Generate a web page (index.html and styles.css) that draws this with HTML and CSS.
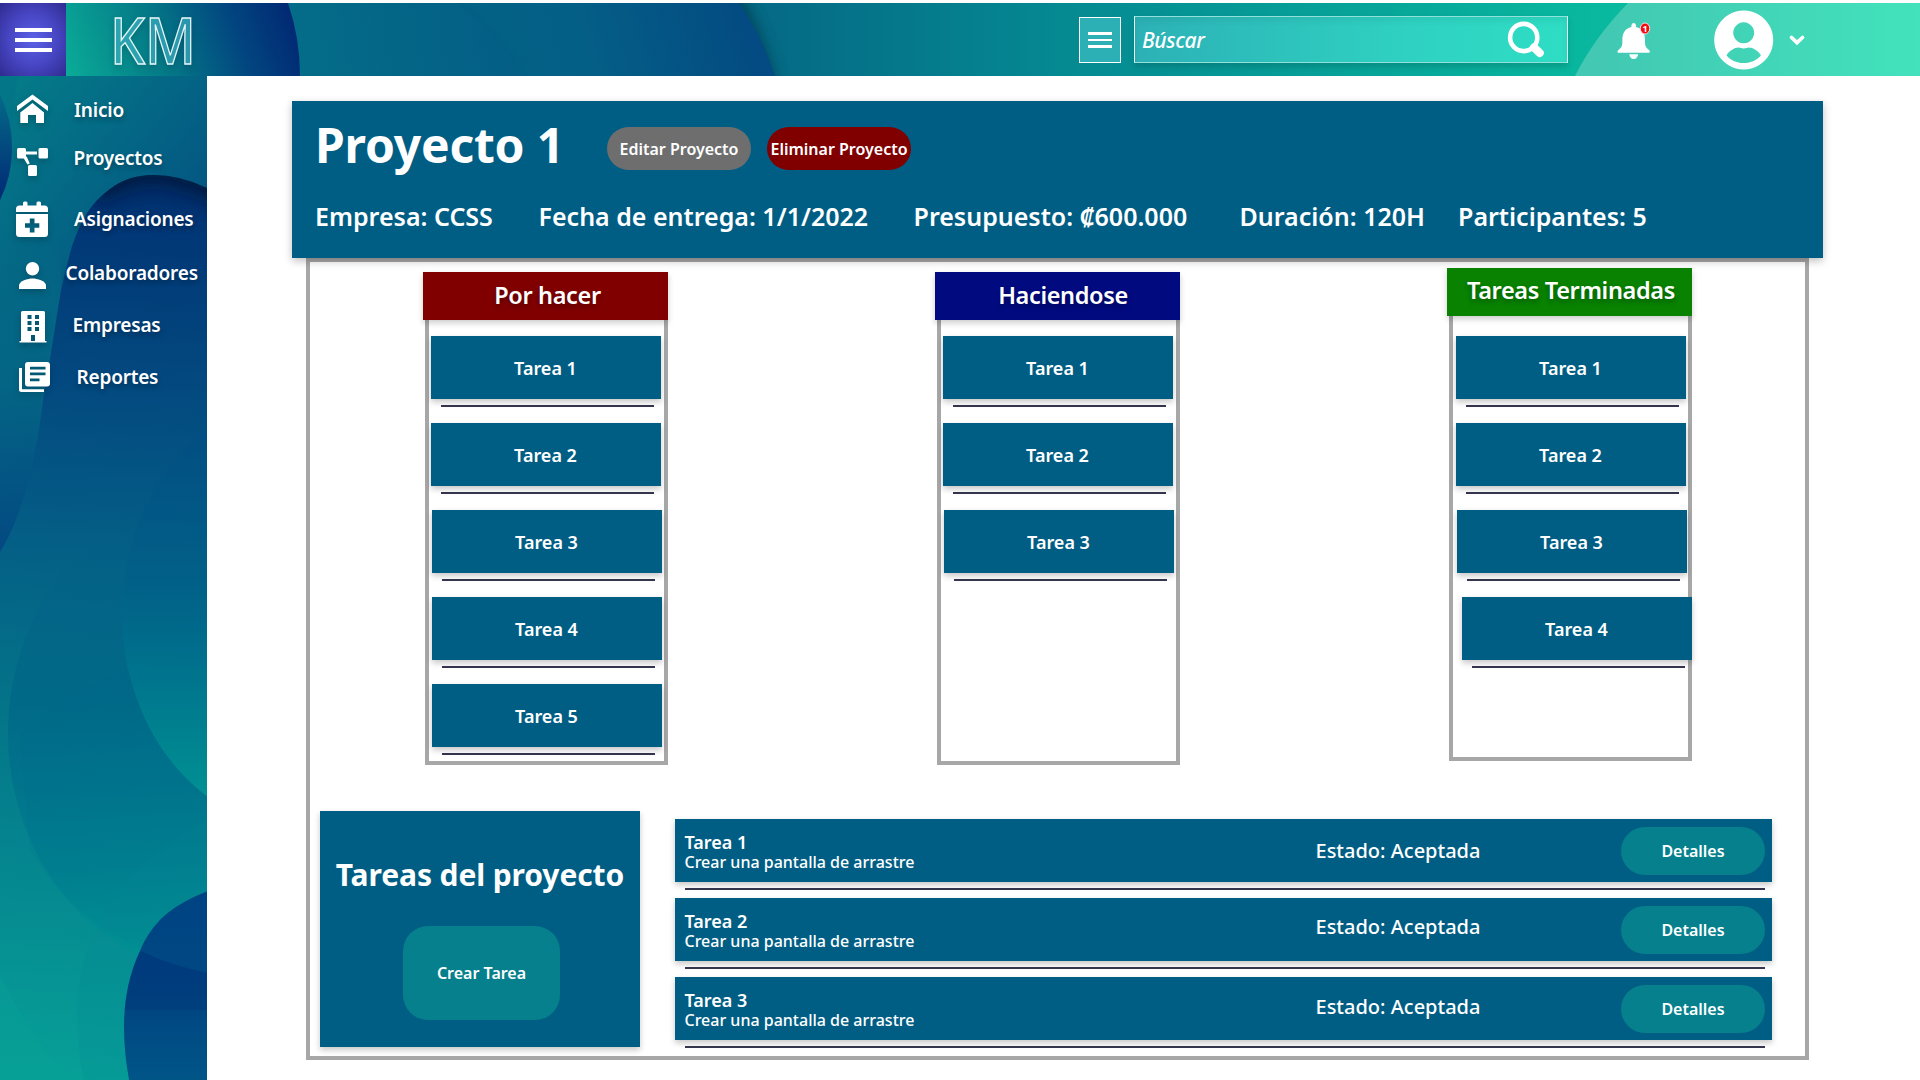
FILE: index.html
```html
<!DOCTYPE html>
<html lang="es">
<head>
<meta charset="utf-8">
<title>KM - Proyecto 1</title>
<link rel="stylesheet" href="styles.css">
</head>
<body>
<header class="topbar">
  <svg class="backdrop" viewBox="0 3 1920 73" preserveAspectRatio="none" aria-hidden="true">
    <defs>
      <linearGradient id="tb-base" gradientUnits="userSpaceOnUse" x1="775" y1="0" x2="1620" y2="0"><stop offset="0" stop-color="#056b86"/><stop offset=".35" stop-color="#058a92"/><stop offset="1" stop-color="#09ba9f"/></linearGradient>
      <linearGradient id="tb-mid" gradientUnits="userSpaceOnUse" x1="450" y1="76" x2="740" y2="0"><stop offset="0" stop-color="#046386"/><stop offset=".45" stop-color="#045f86"/><stop offset="1" stop-color="#034b82"/></linearGradient>
      <linearGradient id="tb-low" gradientUnits="userSpaceOnUse" x1="290" y1="40" x2="530" y2="0"><stop offset="0" stop-color="#046d88"/><stop offset="1" stop-color="#045c86"/></linearGradient>
      <linearGradient id="tb-left" gradientUnits="userSpaceOnUse" x1="66" y1="76" x2="285" y2="0"><stop offset="0" stop-color="#0aac98"/><stop offset=".45" stop-color="#047586"/><stop offset=".75" stop-color="#024680"/><stop offset="1" stop-color="#012a74"/></linearGradient>
      <linearGradient id="tb-right" gradientUnits="userSpaceOnUse" x1="1600" y1="0" x2="1920" y2="0"><stop offset="0" stop-color="#42c8b3"/><stop offset="1" stop-color="#42e2bc"/></linearGradient>
      <filter id="soft" x="-20%" y="-50%" width="140%" height="200%"><feGaussianBlur stdDeviation="7"/></filter>
    </defs>
    <rect y="3" width="1920" height="73" fill="url(#tb-base)"/>
    <path d="M0-20H733Q766 30 780 100H0Z" fill="#013f55" opacity=".8" filter="url(#soft)"/>
    <path d="M0 3H739Q764 40 775 76H0Z" fill="url(#tb-mid)"/>
    <path d="M0 3H455Q495 30 521 76H0Z" fill="#04507a" opacity=".35" filter="url(#soft)"/>
    <path d="M0 3H455Q495 30 521 76H0Z" fill="url(#tb-low)"/>
    <path d="M0 3H288Q300 38 300 76H0Z" fill="url(#tb-left)"/>
    <path d="M1628 3H1920V76H1575Q1594 38 1628 3Z" fill="url(#tb-right)"/>
  </svg>
  <button class="menu-toggle" aria-label="Menú"><i></i><i></i><i></i></button>
  <svg class="logo" width="100" height="60" viewBox="0 0 100 60" role="img" aria-label="KM"><text x="2" y="53.500" textLength="86" lengthAdjust="spacingAndGlyphs">KM</text></svg>
  <div class="tools">
    <button class="filter" aria-label="Filtro"><i></i><i></i><i></i></button>
    <div class="search">
      <span>Búscar</span>
      <svg width="40" height="40" viewBox="0 0 40 40"><circle cx="17.7" cy="17.5" r="13.6" fill="none" stroke="#fff" stroke-width="4.6"/><path d="M28 27.5L33.8 33" stroke="#fff" stroke-width="8" stroke-linecap="round"/></svg>
    </div>
    <svg class="bell" width="40" height="44" viewBox="1614 19 40 44"><path d="M1633.700 23q2.300 0 2.300 2.500v1.500c6.500 1.500 9 6.500 9 12.500 0 7 .5 7.500 4 10.500 1.800 2 .8 2.700-.5 2.700h-29.600c-1.300 0-2.300-.7-.5-2.700 3.500-3 4-3.500 4-10.500 0-6 2.500-11 9-12.500v-1.500q0-2.500 2.300-2.500zM1629.200 54.300h9q-.8 4.700-4.500 4.700t-4.500-4.700z" fill="#fff"/><ellipse cx="1645" cy="28.500" rx="4.700" ry="5.500" fill="#f00c12" stroke="#fff" stroke-width=".8"/><text x="1645" y="32" class="badge">1</text></svg>
    <svg class="avatar" width="60" height="60" viewBox="1714 9.500 60 60"><path fill="#fff" fill-rule="evenodd" d="M1743.700 10a29.500 29.500 0 1 0 .01 0zM1743.700 21.800a10.500 10.500 0 1 1-.01 0zM1726.500 54.700c3-4.500 8-7.700 12-7.700 2 0 3 .9 5.200.9s3.200-.9 5.200-.9c4 0 9 3.200 12 7.700-3.500 4.800-10 7.800-17.200 7.800s-13.700-3-17.200-7.800z"/></svg>
    <svg class="chevron" width="18" height="14" viewBox="0 0 18 14"><path d="M3.500 4.500L9 9.700 14.500 4.500" fill="none" stroke="#fff" stroke-width="3.700" stroke-linecap="round"/></svg>
  </div>
</header>
<div class="shell">
  <nav class="sidebar">
    <svg class="backdrop" viewBox="0 76 207 1004" preserveAspectRatio="none" aria-hidden="true">
      <defs>
        <linearGradient id="sb-top" gradientUnits="userSpaceOnUse" x1="10" y1="80" x2="190" y2="230"><stop offset="0" stop-color="#047b88"/><stop offset=".55" stop-color="#046685"/><stop offset="1" stop-color="#045482"/></linearGradient>
        <linearGradient id="sb-wave" gradientUnits="userSpaceOnUse" x1="0" y1="250" x2="30" y2="550"><stop offset="0" stop-color="#047386" stop-opacity="0"/><stop offset=".45" stop-color="#046585"/><stop offset="1" stop-color="#034982"/></linearGradient>
        <linearGradient id="sb-body" gradientUnits="userSpaceOnUse" x1="130" y1="175" x2="90" y2="1080"><stop offset="0" stop-color="#012b69"/><stop offset=".06" stop-color="#013776"/><stop offset=".25" stop-color="#034b80"/><stop offset=".42" stop-color="#046086"/><stop offset=".6" stop-color="#047589"/><stop offset=".8" stop-color="#058a91"/><stop offset="1" stop-color="#07a097"/></linearGradient>
        <linearGradient id="sb-b" gradientUnits="userSpaceOnUse" x1="80" y1="520" x2="110" y2="970"><stop offset="0" stop-color="#035b87" stop-opacity="0"/><stop offset=".4" stop-color="#006688" stop-opacity=".75"/><stop offset=".75" stop-color="#017f90"/><stop offset="1" stop-color="#019694"/></linearGradient>
        <linearGradient id="sb-a" gradientUnits="userSpaceOnUse" x1="170" y1="430" x2="170" y2="800"><stop offset="0" stop-color="#014d83" stop-opacity=".6"/><stop offset=".4" stop-color="#005e88" stop-opacity=".6"/><stop offset=".65" stop-color="#00748e"/><stop offset="1" stop-color="#009995"/></linearGradient>
        <linearGradient id="sb-blob" gradientUnits="userSpaceOnUse" x1="160" y1="895" x2="160" y2="1080"><stop offset="0" stop-color="#003a80"/><stop offset=".5" stop-color="#004280"/><stop offset="1" stop-color="#005587"/></linearGradient>
        <linearGradient id="sb-drop" x1="0" y1="0" x2="0" y2="1"><stop offset="0" stop-color="#046a88"/><stop offset="1" stop-color="#012975"/></linearGradient>
        <filter id="blur" x="-50%" y="-50%" width="200%" height="200%"><feGaussianBlur stdDeviation="9"/></filter>
        <clipPath id="body-clip"><path id="body-shape" d="M220 195L207 188Q180 175 153 175Q128 175 110 189Q96 199 87 213Q78 228 72 246Q64 275 60 296L50 359Q46 385 43 400Q39 436 33 461Q27 490 17 517Q9 538 0 552V1080H220Z"/></clipPath>
        <clipPath id="blob-clip"><path d="M220 887Q180 900 160 920Q146 935 140 951Q124 985 124 1027Q124 1055 130 1085H220Z"/></clipPath>
      </defs>
      <rect y="76" width="207" height="1004" fill="url(#sb-top)"/>
      <rect y="250" width="60" height="310" fill="url(#sb-wave)"/>
      <path d="M0 76H18Q12 105 12 140 12 175 0 201Z" fill="#046f88" opacity=".35"/>
      <path d="M0 94Q12 120 12 148T0 200Z" fill="url(#sb-drop)"/>
      <use href="#body-shape" fill="url(#sb-body)"/>
      <g clip-path="url(#body-clip)">
        <path d="M85 160H230V210Q185 184 153 183Q125 184 100 204Z" fill="#011430" opacity=".75" filter="url(#blur)"/>
        <ellipse cx="220" cy="733" rx="212" ry="240" fill="url(#sb-b)"/>
        <path d="M20 735Q90 665 220 650V973Q90 950 30 850Z" fill="#006b8c" opacity=".08"/>
        <ellipse cx="300" cy="613" rx="178" ry="215" fill="url(#sb-a)"/>
        <path d="M128 675Q165 655 207 651V803Q150 745 128 675Z" fill="#00708d" opacity=".18"/>
        <path d="M0 974Q25 1030 70 1080H0Z" fill="#09a397" opacity=".3"/>
        <path d="M207 820Q80 890 77 1010 77 1050 84 1080H207Z" fill="#058595" opacity=".18"/>
      </g>
      <g clip-path="url(#blob-clip)">
        <rect x="110" y="880" width="100" height="200" fill="url(#sb-blob)"/>
        <path d="M110 880H207V973Q170 965 140 951L110 935Z" fill="#00598a" opacity=".3"/>
        <path d="M110 935L140 951Q170 965 207 973V1010H110Z" fill="#003478" opacity=".35"/>
      </g>
    </svg>
    <ul class="nav-list">
      <li class="nav-item"><svg viewBox="0 90 60 40"><path d="M17 111v-5l15.500-11.500L48 106v5L32.500 99.500zM20.300 112.500l12.200-9.500 11.500 9.500V123h-8v-8h-8v8h-7.700z"/></svg><span>Inicio</span></li>
      <li class="nav-item projects"><svg viewBox="0 138 60 40"><rect x="17" y="148" width="9" height="10.500" rx="1.500"/><rect x="38.500" y="148" width="9.500" height="10.500" rx="1.500"/><rect x="28" y="165" width="9" height="11" rx="1.500"/><path d="M26 151.500h11v3h-11zM23.500 158l3.200-1.500 3 7-2.200 1z"/></svg><span>Proyectos</span></li>
      <li class="nav-item assigns"><svg viewBox="0 199 60 40"><path fill-rule="evenodd" d="M16 212v-3q0-3.500 3.500-3.500H23V203q0-1.500 1.500-1.500h1.500q1.500 0 1.500 1.500v2.500h9V203q0-1.500 1.500-1.500h1.500q1.500 0 1.500 1.500v2.500h3.500q3.500 0 3.500 3.500v3zM16 214h32v19.500q0 3.500-3.500 3.500h-25q-3.500 0-3.500-3.500zM29.800 218.500v4.700H25v4.600h4.800v4.700h4.700v-4.700h4.800v-4.600h-4.800v-4.700z"/></svg><span>Asignaciones</span></li>
      <li class="nav-item people"><svg viewBox="0 253 60 40"><circle cx="32.500" cy="268.800" r="6.700"/><path d="M19 289v-3.500c0-4.500 9-7 13.500-7s13.500 2.500 13.500 7v3.500z"/></svg><span>Colaboradores</span></li>
      <li class="nav-item companies"><svg viewBox="0 305 60 40"><path fill-rule="evenodd" d="M22.500 311h21q1.500 0 1.500 1.500V341h1.500v1.500h-27V341H21v-28.500q0-1.500 1.500-1.500zM27.500 315v4h4v-4zM35 315v4h4v-4zM27.500 321v4h4v-4zM35 321v4h4v-4zM27.500 327v4h4v-4zM35 327v4h4v-4zM31 335v6h4v-6z"/></svg><span>Empresas</span></li>
      <li class="nav-item reports"><svg viewBox="0 357 60 40"><path fill-rule="evenodd" d="M28 362h19q3 0 3 3v18.500q0 3-3 3H28q-3 0-3-3V365q0-3 3-3zM30 366.700v2.700h15.500v-2.700zM30 372.500v2.700h15.500v-2.700zM30 378.500v2.700h9.500v-2.700zM19 368h3v21.300h22V392H21.500q-2.500 0-2.500-2.500z"/></svg><span>Reportes</span></li>
    </ul>
  </nav>
  <main class="content">
    <section class="project">
      <div class="project-top">
        <h1>Proyecto 1</h1>
        <button class="pill edit">Editar Proyecto</button>
        <button class="pill delete">Eliminar Proyecto</button>
      </div>
      <div class="facts">
        <span class="f1">Empresa: CCSS</span><span class="f2">Fecha de entrega: 1/1/2022</span><span class="f3">Presupuesto: ₡600.000</span><span class="f4">Duración: 120H</span><span class="f5">Participantes: 5</span>
      </div>
    </section>
    <section class="frame">
      <div class="board">
        <div class="column todo">
          <h2>Por hacer</h2>
          <div class="stack">
            <div class="card">Tarea 1</div>
            <div class="card">Tarea 2</div>
            <div class="card nudge">Tarea 3</div>
            <div class="card nudge">Tarea 4</div>
            <div class="card nudge">Tarea 5</div>
          </div>
        </div>
        <div class="column doing">
          <h2>Haciendose</h2>
          <div class="stack">
            <div class="card">Tarea 1</div>
            <div class="card">Tarea 2</div>
            <div class="card nudge">Tarea 3</div>
          </div>
        </div>
        <div class="column done">
          <h2>Tareas Terminadas</h2>
          <div class="stack">
            <div class="card">Tarea 1</div>
            <div class="card">Tarea 2</div>
            <div class="card nudge">Tarea 3</div>
            <div class="card far">Tarea 4</div>
          </div>
        </div>
      </div>
      <div class="bottom">
        <div class="create">
          <h2>Tareas del proyecto</h2>
          <button>Crear Tarea</button>
        </div>
        <div class="list">
          <div class="row"><div class="what"><b>Tarea 1</b><span>Crear una pantalla de arrastre</span></div><div class="state">Estado: Aceptada</div><button>Detalles</button></div>
          <div class="row"><div class="what"><b>Tarea 2</b><span>Crear una pantalla de arrastre</span></div><div class="state up3">Estado: Aceptada</div><button>Detalles</button></div>
          <div class="row"><div class="what"><b>Tarea 3</b><span>Crear una pantalla de arrastre</span></div><div class="state up2">Estado: Aceptada</div><button>Detalles</button></div>
        </div>
      </div>
    </section>
  </main>
</div>
</body>
</html>
```
FILE: styles.css
```css
* { box-sizing: border-box; }
body { margin: 0; padding-top: 3px; width: 1920px; height: 1080px; overflow: hidden; background: #fff; color: #fff; font-family: "Noto Sans", sans-serif; font-weight: 600; }
h1, h2, ul { margin: 0; padding: 0; }
button { border: 0; padding: 0; color: inherit; font: inherit; white-space: nowrap; }
span { white-space: nowrap; }

/* Header */
.topbar { position: relative; height: 73px; display: flex; align-items: stretch; }
.backdrop { position: absolute; inset: 0; width: 100%; height: 100%; z-index: -1; }
.menu-toggle { width: 66px; display: flex; flex-direction: column; align-items: center; justify-content: center; gap: 6px; background: radial-gradient(ellipse 46px 50px, #5a62e8, #4644c0 55%, #302c92); }
.menu-toggle i { width: 37px; height: 4px; background: #fff; }
.logo { margin: 7px 0 0 42px; overflow: visible; filter: drop-shadow(0 3px 3px rgba(0, 0, 0, .2)); }
.logo text { font: 500 64px "Noto Sans", sans-serif; fill: rgba(70, 190, 210, .6); stroke: #e8f6f8; stroke-width: 1.4px; }
.tools { margin-left: auto; display: flex; align-items: flex-start; padding-right: 114px; }
.filter { width: 42px; height: 46px; margin: 14px 13px 0 0; border: 1px solid #fff; display: flex; flex-direction: column; align-items: center; justify-content: center; gap: 4px; background: #2cb0b6; }
.filter i { width: 24px; height: 2.5px; background: #fff; }
.search { width: 434px; height: 47px; margin-top: 13px; padding: 1px 21px 0 7px; border: 1px solid #fff; border-width: 1.500px 1px; border-color: #92e0da #e6fbf8; display: flex; align-items: center; justify-content: space-between; background: linear-gradient(90deg, #2cb1b6, #2fd2c2 65%, #2eddc4); box-shadow: 0 4px 6px rgba(0, 0, 0, .14), inset 0 4px 6px rgba(0, 0, 0, .06); font: italic 500 21px/40px "Noto Sans", sans-serif; letter-spacing: -.4px; }
.bell { margin: 16px 0 0 46px; }
.badge { font: 700 9px "Noto Sans", sans-serif; fill: #fff; text-anchor: middle; }
.avatar { margin: 6.500px 0 0 60px; }
.chevron { margin: 29.500px 0 0 14px; }

/* Sidebar */
.shell { display: flex; height: 1004px; }
.sidebar { position: relative; width: 207px; padding-top: 14px; }
.nav-list { list-style: none; }
.nav-item { display: flex; align-items: center; height: 40px; font-size: 19px; letter-spacing: -.2px; line-height: 40px; text-shadow: 0 3px 5px rgba(0, 0, 0, .3); }
.nav-item svg { width: 60px; height: 40px; flex: none; fill: #fff; filter: drop-shadow(0 3px 3px rgba(0, 0, 0, .2)); }
.nav-item span { margin-left: 14px; }
.projects { margin-top: 8px; }
.projects span { margin-left: 13.500px; }
.assigns { margin-top: 21px; }
.people { margin-top: 14px; }
.people span { margin-left: 5.500px; }
.companies { margin-top: 12px; }
.companies span { margin-left: 12.500px; }
.reports { margin-top: 12px; }
.reports span { margin-left: 16.500px; }

/* Project summary */
.content { flex: 1; padding: 25px 97px 0 85px; }
.project { position: relative; height: 157px; background: #005e84; box-shadow: 0 3px 8px rgba(0, 0, 0, .25); }
.project-top { display: flex; height: 90px; padding-left: 23px; }
.project h1 { width: 292px; font-size: 48px; font-weight: 700; letter-spacing: -.2px; line-height: 87px; white-space: nowrap; }
.pill { width: 144px; height: 43px; margin: 26px 16px 0 0; padding-top: 1px; border-radius: 22px; font-size: 16px; line-height: 42px; }
.edit { background: #6e6e6e; }
.delete { background: #800000; }
.facts { display: flex; padding-left: 23px; font-size: 25px; line-height: 50px; }
.f1 { width: 223.500px; }
.f2 { width: 375px; }
.f3 { width: 326px; }
.f4 { width: 218.500px; }

/* Board */
.frame { width: 1503px; height: 802px; margin-left: 14px; border: 4px solid #a7a7a7; }
.board { display: flex; height: 549px; padding: 10px 0 0 113px; }
.column { position: relative; width: 245px; height: 493px; margin-right: 267px; }
.column h2 { position: relative; z-index: 1; height: 48px; font-size: 23.500px; letter-spacing: -.35px; font-weight: 600; line-height: 47px; text-align: center; white-space: nowrap; box-shadow: 0 3px 6px rgba(0, 0, 0, .2); text-shadow: 0 3px 5px rgba(0, 0, 0, .3); }
.todo h2 { background: #800000; padding-left: 4px; }
.doing h2 { background: #020a80; padding-left: 11px; }
.done { margin: -4px 0 0; }
.done h2 { background: #088200; line-height: 44px; padding-left: 3px; }
.stack { height: 445px; margin-left: 2px; padding: 16px 0 0 2px; border: solid #a7a7a7; border-width: 0 4px 4px; display: flex; flex-direction: column; gap: 24px; }
.done .stack { padding: 20px 0 0 3px; }
.card { position: relative; flex: none; width: 230px; height: 63px; padding-right: 1px; background: #005e84; font-size: 18px; line-height: 64px; text-align: center; box-shadow: 0 3px 6px rgba(0, 0, 0, .22); }
.card::after, .row::after { content: ""; position: absolute; left: 10px; right: 7px; top: 69px; height: 2px; background: #34344c; }
.nudge { margin-left: 1px; }
.far { margin-left: 6px; }

/* Project tasks */
.bottom { display: flex; padding-left: 10px; }
.create { width: 320px; height: 236px; background: #005e84; box-shadow: 0 3px 6px rgba(0, 0, 0, .22); display: flex; flex-direction: column; align-items: center; }
.create h2 { height: 115px; font-size: 30px; letter-spacing: -.1px; font-weight: 700; line-height: 128px; white-space: nowrap; }
.create button { width: 157px; height: 94px; margin-left: 3px; border-radius: 25px; background: #05808c; font-size: 16px; line-height: 94px; }
.list { width: 1097px; margin: 8px 0 0 34.500px; display: flex; flex-direction: column; gap: 16px; }
.row { position: relative; height: 63px; display: flex; background: #005e84; box-shadow: 0 3px 6px rgba(0, 0, 0, .22); }
.what { width: 641px; padding: 13px 0 0 10px; display: flex; flex-direction: column; font-size: 16px; line-height: 20px; font-weight: 500; }
.what b { font-size: 18px; line-height: 20px; font-weight: 600; }
.what span { line-height: 21px; }
.state { width: 305.500px; font-size: 20px; font-weight: 500; line-height: 63px; white-space: nowrap; }
.up3 { margin-top: -3px; }
.up2 { margin-top: -2px; }
.row button { width: 144px; height: 48px; margin-top: 8px; border-radius: 24px; background: #05808c; font-size: 16px; line-height: 48px; }
```
